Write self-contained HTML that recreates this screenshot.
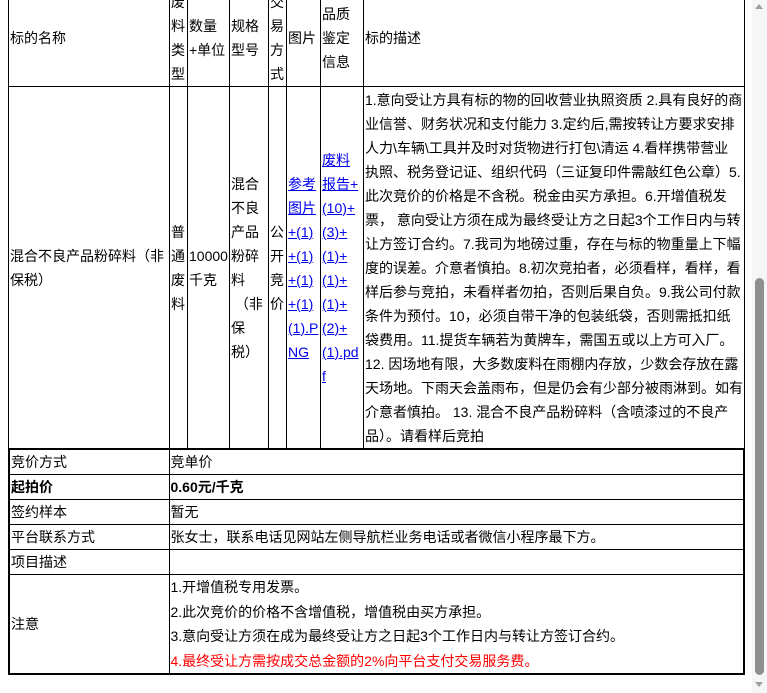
<!DOCTYPE html>
<html><head><meta charset="utf-8"><style>
html,body{margin:0;padding:0;width:767px;height:693px;overflow:hidden;background:#fff;}
body{font-family:"Liberation Sans","Noto Sans CJK SC",sans-serif;font-size:14px;color:#000;position:relative;}
table{border-collapse:collapse;table-layout:fixed;position:absolute;left:8px;}
td{border:1px solid #000;padding:0 1px;vertical-align:middle;line-height:24px;overflow:hidden;white-space:nowrap;}
a{color:#0000ee;text-decoration:underline;}
#t1{top:-12px;width:736px;}
#t2{top:448px;width:737px;border:2px solid #000;}
#t2 td{height:24px;line-height:24px;}
#t2 p{margin:0;line-height:24.5px;}
.sb{position:absolute;left:752px;top:0;width:15px;height:693px;background:#f6f6f6;}
.th{position:absolute;left:755px;top:278px;width:9px;height:397px;background:#8f8f8f;border-radius:5px;}
.up{position:absolute;left:755px;top:4px;width:0;height:0;border-left:4.5px solid transparent;border-right:4.5px solid transparent;border-bottom:5px solid #a0a0a0;}
.dn{position:absolute;left:755px;top:682px;width:0;height:0;border-left:4.5px solid transparent;border-right:4.5px solid transparent;border-top:5px solid #a0a0a0;}
</style></head><body>
<table id="t1">
<colgroup><col style="width:161px"><col style="width:18px"><col style="width:42px"><col style="width:39px"><col style="width:18px"><col style="width:34px"><col style="width:43px"><col style="width:381px"></colgroup>
<tr style="height:98px">
<td>标的名称</td><td>废<br>料<br>类<br>型</td><td>数量<br>+单位</td><td>规格<br>型号</td><td>交<br>易<br>方<br>式</td><td>图片</td><td>品质<br>鉴定<br>信息</td><td>标的描述</td></tr>
<tr style="height:362px">
<td>混合不良产品粉碎料（非<br>保税）</td>
<td>普<br>通<br>废<br>料</td>
<td>10000<br>千克</td>
<td>混合<br>不良<br>产品<br>粉碎<br>料<br>&nbsp;（非<br>保<br>税）</td>
<td>公<br>开<br>竞<br>价</td>
<td><a>参考<br>图片<br>+(1)<br>+(1)<br>+(1)<br>+(1)<br>(1).P<br>NG</a></td>
<td><a>废料<br>报告+<br>(10)+<br>(3)+<br>(1)+<br>(1)+<br>(1)+<br>(2)+<br>(1).pd<br>f</a></td>
<td>1.意向受让方具有标的物的回收营业执照资质 2.具有良好的商<br>业信誉、财务状况和支付能力 3.定约后,需按转让方要求安排<br>人力\车辆\工具并及时对货物进行打包\清运 4.看样携带营业<br>执照、税务登记证、组织代码（三证复印件需敲红色公章）5.<br>此次竞价的价格是不含税。税金由买方承担。6.开增值税发<br>票， 意向受让方须在成为最终受让方之日起3个工作日内与转<br>让方签订合约。7.我司为地磅过重，存在与标的物重量上下幅<br>度的误差。介意者慎拍。8.初次竞拍者，必须看样，看样，看<br>样后参与竞拍，未看样者勿拍，否则后果自负。9.我公司付款<br>条件为预付。10，必须自带干净的包装纸袋，否则需抵扣纸<br>袋费用。11.提货车辆若为黄牌车，需国五或以上方可入厂。<br>12. 因场地有限，大多数废料在雨棚内存放，少数会存放在露<br>天场地。下雨天会盖雨布，但是仍会有少部分被雨淋到。如有<br>介意者慎拍。 13. 混合不良产品粉碎料（含喷漆过的不良产<br>品）。请看样后竞拍</td>
</tr></table>
<table id="t2">
<colgroup><col style="width:160px"><col></colgroup>
<tr><td>竞价方式</td><td>竞单价</td></tr>
<tr><td><b>起拍价</b></td><td><b>0.60元/千克</b></td></tr>
<tr><td>签约样本</td><td>暂无</td></tr>
<tr><td>平台联系方式</td><td>张女士，联系电话见网站左侧导航栏业务电话或者微信小程序最下方。</td></tr>
<tr><td>项目描述</td><td></td></tr>
<tr><td style="height:96px">注意</td><td><p>1.开增值税专用发票。</p><p>2.此次竞价的价格不含增值税，增值税由买方承担。</p><p>3.意向受让方须在成为最终受让方之日起3个工作日内与转让方签订合约。</p><p style="color:#f00">4.最终受让方需按成交总金额的2%向平台支付交易服务费。</p></td></tr>
</table>
<div class="sb"></div><div class="up"></div><div class="th"></div><div class="dn"></div>
</body></html>
